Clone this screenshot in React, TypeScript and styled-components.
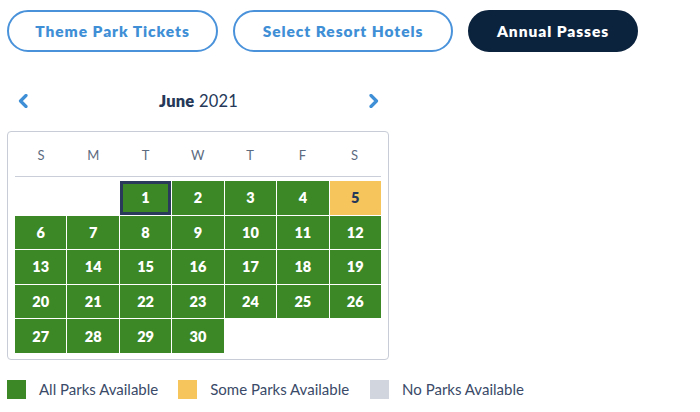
import React from "react";
import styled, {createGlobalStyle, css} from "styled-components";

const GlobalStyle = createGlobalStyle`
  body {
    margin: 0;
    background: #ffffff;
    font-family: Lato, "Noto Sans", Arial, sans-serif;
  }
`

type Status = "all" | "some" | "none"

type DayType = {
    day: number
    status: Status
    selected?: boolean
}

const WEEKDAYS = ["S", "M", "T", "W", "T", "F", "S"]
const FIRST_OFFSET = 2

const days: DayType[] = Array.from({length: 30}, (_, i) => ({
    day: i + 1,
    status: i + 1 === 5 ? "some" : "all",
    selected: i === 0,
}))

const LEGEND: { status: Status, label: string }[] = [
    {status: "all", label: "All Parks Available"},
    {status: "some", label: "Some Parks Available"},
    {status: "none", label: "No Parks Available"},
]

function Chevron(props: { dir: "left" | "right" }) {
    return (
        <svg width="12" height="14" viewBox="0 0 12 14" fill="none">
            <path
                d={props.dir === "left" ? "M9 1.5L3.5 7L9 12.5" : "M3 1.5L8.5 7L3 12.5"}
                stroke="#3f8fd6" strokeWidth="3.2" strokeLinecap="round" strokeLinejoin="round"/>
        </svg>
    )
}

export default function App() {
    return (
        <Page>
            <GlobalStyle/>
            <Tabs>
                <Tab>Theme Park Tickets</Tab>
                <Tab>Select Resort Hotels</Tab>
                <Tab active>Annual Passes</Tab>
            </Tabs>

            <CalendarWrap>
                <MonthBar>
                    <NavButton aria-label="previous month"><Chevron dir="left"/></NavButton>
                    <MonthTitle><b>June</b> 2021</MonthTitle>
                    <NavButton aria-label="next month"><Chevron dir="right"/></NavButton>
                </MonthBar>

                <CalendarBox>
                    <WeekRow>
                        {WEEKDAYS.map((d, i) => <WeekDay key={i}>{d}</WeekDay>)}
                    </WeekRow>
                    <DayGrid>
                        {Array.from({length: FIRST_OFFSET}, (_, i) => <Empty key={"e" + i}/>)}
                        {days.map(d => (
                            <Day key={d.day} status={d.status} selected={d.selected}>{d.day}</Day>
                        ))}
                    </DayGrid>
                </CalendarBox>
            </CalendarWrap>

            <Legend>
                {LEGEND.map(l => (
                    <LegendItem key={l.status}>
                        <Swatch status={l.status}/>
                        {l.label}
                    </LegendItem>
                ))}
            </Legend>
        </Page>
    )
}

const statusColor = {
    all: "#3c8726",
    some: "#f6c55c",
    none: "#d1d5de",
}

const Page = styled.div`
  width: 700px;
  height: 412px;
  padding: 10px 0 0 7px;
  box-sizing: border-box;
  overflow: hidden;
`

const Tabs = styled.div`
  display: flex;
  gap: 15px;
`

const Tab = styled.button<{ active?: boolean }>`
  height: 42px;
  padding: 0 20px;
  border-radius: 21px;
  border: 2px solid #4a93db;
  background: white;
  color: #3f8fd6;
  font-family: Lato, "Noto Sans", Arial, sans-serif;
  font-weight: 800;
  font-size: 15.5px;
  letter-spacing: 0.95px;
  cursor: pointer;

  &:nth-child(1) {
    width: 211px;
  }

  &:nth-child(2) {
    width: 220px;
  }

  ${props => props.active && css`
    width: 170px;
    background: #0c233e;
    border-color: #0c233e;
    color: white;
  `}
`

const CalendarWrap = styled.div`
  width: 382px;
  margin-top: 33px;
`

const MonthBar = styled.div`
  display: flex;
  align-items: center;
  justify-content: space-between;
  height: 32px;
  padding: 0 8px 0 9px;
`

const NavButton = styled.button`
  background: none;
  border: none;
  padding: 0;
  width: 14px;
  height: 16px;
  display: flex;
  align-items: center;
  justify-content: center;
  cursor: pointer;
`

const MonthTitle = styled.div`
  font-size: 16.5px;
  color: #253858;
  letter-spacing: 0.2px;

  b {
    font-weight: 800;
  }
`

const CalendarBox = styled.div`
  margin-top: 14px;
  border: 1px solid #c7ccd7;
  border-radius: 4px;
  padding: 0 7px 6px 7px;
`

const WeekRow = styled.div`
  display: grid;
  grid-template-columns: repeat(7, 1fr);
  height: 43px;
  align-items: center;
  border-bottom: 1.5px solid #c9ced8;
  margin-bottom: 4px;
  padding-top: 1px;
`

const WeekDay = styled.div`
  text-align: center;
  font-size: 13px;
  color: #5c6b80;
  letter-spacing: 0.4px;
`

const DayGrid = styled.div`
  display: grid;
  grid-template-columns: repeat(7, 1fr);
  grid-auto-rows: 33.6px;
  gap: 1px;
`

const Empty = styled.div``

const Day = styled.div<{ status: Status, selected?: boolean }>`
  display: flex;
  align-items: center;
  justify-content: center;
  background: ${props => statusColor[props.status]};
  color: ${props => props.status === "some" ? "#26385a" : "white"};
  font-weight: 800;
  font-size: 14.5px;
  box-sizing: border-box;

  ${props => props.selected && css`
    border: 3px solid #2a3a5a;
  `}
`

const Legend = styled.div`
  display: flex;
  align-items: center;
  margin-top: 20px;
  gap: 24px;
`

const LegendItem = styled.div`
  display: flex;
  align-items: center;
  gap: 13px;
  font-size: 15px;
  color: #3a4a68;

  &:nth-child(2) {
    margin-left: -4px;
  }

  &:nth-child(3) {
    margin-left: -3px;
  }
`

const Swatch = styled.span<{ status: Status }>`
  width: 19px;
  height: 19px;
  background: ${props => statusColor[props.status]};
`
